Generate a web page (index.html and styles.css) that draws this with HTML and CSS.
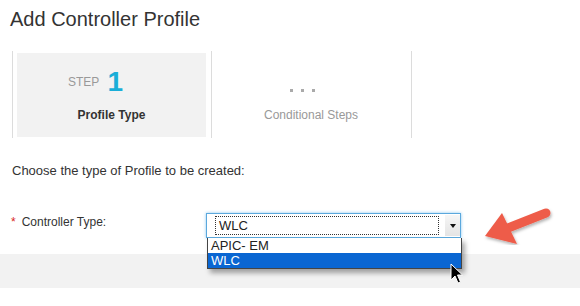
FILE: index.html
```html
<!doctype html>
<html lang="en">
<head>
    <meta charset="UTF-8" />
    <title>Add Controller Profile</title>
    <link rel="stylesheet" href="styles.css">
</head>
<body>
    <h1 class="title">Add Controller Profile</h1>

    <div class="wizard">
        <div class="step active">
            <div class="step-inner">
                <div class="step-head">
                    <span class="step-label">STEP</span>
                    <span class="step-num">1</span>
                </div>
                <div class="step-name">Profile Type</div>
            </div>
        </div>
        <div class="step">
            <div class="step-inner">
                <div class="step-head dots">
                    <span></span><span></span><span></span>
                </div>
                <div class="step-name">Conditional Steps</div>
            </div>
        </div>
        <div class="step last"></div>
    </div>

    <p class="intro">Choose the type of Profile to be created:</p>

    <div class="field">
        <label class="field-label"><span class="req">*</span>Controller Type:</label>
        <div class="select-wrap">
            <div class="select">
                <span class="select-value">WLC</span>
                <span class="select-btn"><span class="caret"></span></span>
            </div>
            <ul class="options">
                <li>APIC- EM</li>
                <li class="selected">WLC</li>
            </ul>
        </div>
    </div>

    <div class="footer"></div>

    <!-- callout arrow -->
    <svg class="callout" width="80" height="50" viewBox="0 0 80 50">
        <defs>
            <filter id="soft" x="-20%" y="-20%" width="140%" height="140%">
                <feDropShadow dx="1" dy="2" stdDeviation="1.5" flood-color="#000" flood-opacity="0.3"/>
            </filter>
        </defs>
        <g filter="url(#soft)" fill="#ee5b48">
            <line x1="28" y1="33" x2="66" y2="18" stroke="#ee5b48" stroke-width="9" stroke-linecap="round"/>
            <polygon points="5,41 22,18 37,49"/>
        </g>
    </svg>

    <!-- mouse pointer -->
    <svg class="pointer" width="14" height="22" viewBox="0 0 14 22">
        <path d="M1 1 L1 17 L5 13 L8 20 L10.5 19 L7.5 12 L12.5 12 Z" fill="#000" stroke="#fff" stroke-width="1"/>
    </svg>
</body>
</html>
```

FILE: styles.css
```css
* {
    margin: 0;
    padding: 0;
    box-sizing: border-box;
}

body {
    font-family: "Liberation Sans", Arial, sans-serif;
    color: #333;
    background: #fff;
    width: 580px;
    height: 306px;
    overflow: hidden;
}

.title {
    font-size: 20px;
    font-weight: normal;
    line-height: 24px;
    padding: 7px 0 0 10px;
    color: #333;
}

.wizard {
    display: flex;
    margin: 20px 0 0 12px;
    height: 87px;
}

.step {
    width: 199px;
    border-left: 1px solid #dcdcdc;
    padding: 2px 5px 1px 4px;
}

.step:nth-child(2) {
    width: 200px;
}

.step.last {
    width: 10px;
}

.step-inner {
    height: 100%;
    display: flex;
    flex-direction: column;
    align-items: center;
    padding-top: 14px;
}

.step.active .step-inner {
    background: #f2f2f2;
}

.step-head {
    display: flex;
    align-items: center;
    height: 30px;
    gap: 8px;
}

.step.active .step-head {
    margin-right: 32px;
}

.step-label {
    font-size: 12px;
    line-height: 13px;
    color: #999;
}

.step-num {
    font-size: 28px;
    line-height: 30px;
    font-weight: bold;
    color: #1aaed8;
}

.dots {
    align-items: flex-end;
    padding-bottom: 5px;
    margin-right: 18px;
}

.dots span {
    width: 3px;
    height: 3px;
    background: #aaa;
}

.step-name {
    margin-top: 11px;
    font-size: 12px;
    line-height: 14px;
    color: #999;
}

.step.active .step-name {
    font-weight: bold;
    color: #333;
}

.intro {
    font-size: 13px;
    line-height: 15px;
    margin: 25px 0 0 12px;
}

.field {
    display: flex;
    align-items: flex-start;
    margin-top: 35px;
    padding-left: 11px;
}

.field-label {
    width: 195px;
    font-size: 12px;
    line-height: 14px;
    padding-top: 2px;
}

.req {
    color: #d9261c;
    margin-right: 6px;
}

.select-wrap {
    position: relative;
}

.select {
    display: flex;
    align-items: flex-start;
    width: 255px;
    height: 25px;
    border: 1px solid #5ba8dd;
    box-shadow: 0 0 3px #8cc8f0;
    background: #fff;
    padding: 2px 0 0 8px;
}

.select-value {
    width: 224px;
    height: 19px;
    border: 1px dotted #333;
    font-size: 13px;
    line-height: 17px;
    padding-left: 3px;
    color: #222;
}

.select-btn {
    margin-left: auto;
    width: 15px;
    height: 21px;
    margin-top: -1px;
    background: linear-gradient(#f6f6f6, #e4e4e4);
    display: flex;
    align-items: center;
    justify-content: center;
}

.caret {
    width: 0;
    height: 0;
    border-left: 3.5px solid transparent;
    border-right: 3.5px solid transparent;
    border-top: 4px solid #111;
}

.options {
    position: absolute;
    top: 25px;
    left: 1px;
    width: 255px;
    list-style: none;
    background: #fff;
    border: 1px solid #444;
    border-top: none;
    box-shadow: 3px 4px 5px rgba(0, 0, 0, 0.35);
    font-size: 13px;
    line-height: 15px;
    color: #222;
    z-index: 2;
}

.options li {
    padding-left: 3px;
}

.options li.selected {
    background: #0a66d2;
    color: #fff;
}

.footer {
    margin-top: 16px;
    height: 34px;
    background: #f2f2f2;
}

.callout {
    position: absolute;
    left: 480px;
    top: 195px;
}

.pointer {
    position: absolute;
    left: 450px;
    top: 263px;
    z-index: 3;
}
```
